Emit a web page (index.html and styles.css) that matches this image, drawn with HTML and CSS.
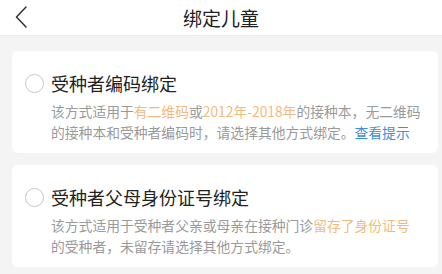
FILE: index.html
```html
<!DOCTYPE html>
<html lang="zh">
<head>
<meta charset="utf-8">
<link rel="stylesheet" href="styles.css">
</head>
<body>
<div class="page">
  <header class="nav">
    <span class="back">
      <svg width="12" height="22" viewBox="0 0 12 22"><polyline points="11,1 1.5,11 11,21" fill="none" stroke="#333" stroke-width="1.5" stroke-linecap="round" stroke-linejoin="round"/></svg>
    </span>
    <h1 class="nav-title">绑定儿童</h1>
  </header>
  <main class="list">
    <section class="card">
      <div class="card-head">
        <span class="radio"></span>
        <span class="card-title">受种者编码绑定</span>
      </div>
      <p class="desc">该方式适用于<span class="hl">有二维码</span>或<span class="hl">2012年-2018年</span>的接种本，无二维码<br>的接种本和受种者编码时，请选择其他方式绑定。<span class="link">查看提示</span></p>
    </section>
    <section class="card">
      <div class="card-head">
        <span class="radio"></span>
        <span class="card-title">受种者父母身份证号绑定</span>
      </div>
      <p class="desc">该方式适用于受种者父亲或母亲在接种门诊<span class="hl">留存了身份证号</span><br>的受种者，未留存请选择其他方式绑定。</p>
    </section>
  </main>
</div>
</body>
</html>
```
FILE: styles.css
```css
html, body {
  margin: 0;
  padding: 0;
}
body {
  background: #f4f4f4;
  font-family: "Noto Sans CJK SC", "Noto Sans", sans-serif;
  width: 442px;
  height: 274px;
  overflow: hidden;
}
.nav {
  height: 35px;
  background: #fff;
  border-bottom: 1px solid #ececec;
  display: flex;
  align-items: center;
  justify-content: center;
  position: relative;
}
.back {
  position: absolute;
  left: 15px;
  top: 6px;
  display: flex;
}
.nav-title {
  margin: 0;
  font-size: 19px;
  font-weight: normal;
  color: #222;
  line-height: 35px;
}
.list {
  padding: 15px 4px 0 12px;
  display: flex;
  flex-direction: column;
  gap: 12px;
}
.card {
  background: #fff;
  border-radius: 6px;
  padding: 19px 6px 10px 13px;
}
.card-head {
  display: flex;
  align-items: center;
  gap: 7px;
  height: 26px;
}
.radio {
  width: 17px;
  height: 17px;
  border: 1px solid #c8c8c8;
  border-radius: 50%;
  flex: none;
}
.card-title {
  font-size: 18px;
  color: #222;
  line-height: 26px;
}
.desc {
  margin: 5px 0 0 26px;
  font-size: 13.8px;
  line-height: 21px;
  color: #9a9a9a;
  white-space: nowrap;
}
.hl {
  color: #f2bb7e;
}
.link {
  color: #3b8fde;
}
```
